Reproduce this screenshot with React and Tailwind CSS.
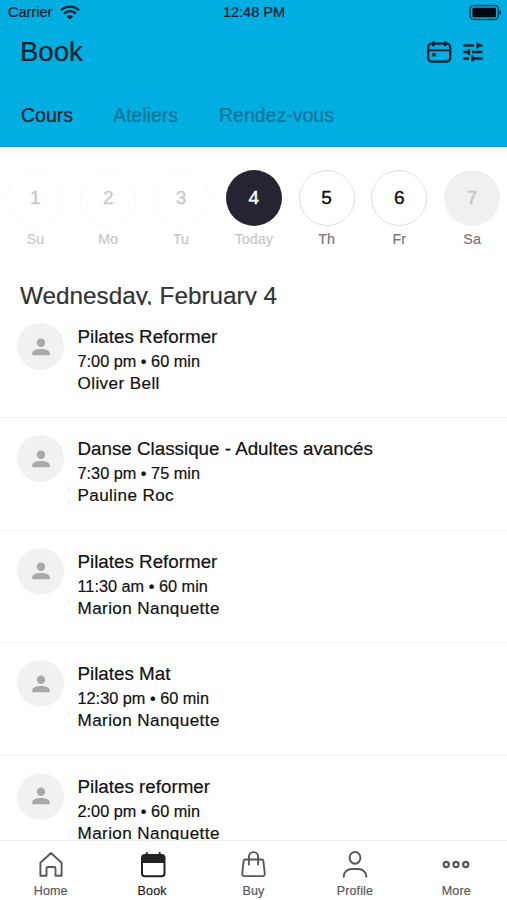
import React, { useState } from 'react'

const TABS = [
  { value: 'cours', label: 'Cours', className: 'w-[92px]' },
  { value: 'ateliers', label: 'Ateliers', className: 'w-[106px]' },
  { value: 'rendez-vous', label: 'Rendez-vous', className: '' },
]

const DAYS = [
  { date: 1, label: 'Su', state: 'past' },
  { date: 2, label: 'Mo', state: 'past' },
  { date: 3, label: 'Tu', state: 'past' },
  { date: 4, label: 'Today', state: 'selected' },
  { date: 5, label: 'Th', state: 'open' },
  { date: 6, label: 'Fr', state: 'open' },
  { date: 7, label: 'Sa', state: 'empty' },
]

const CIRCLE_STYLES = {
  past: 'border border-[#fafafa] text-[#c9c9c9]',
  selected: 'bg-[#252432] text-white',
  open: 'border border-[#dedede] text-[#111]',
  empty: 'bg-[#f0f0f0] text-[#c4c4c4]',
}

const LABEL_STYLES = {
  past: 'text-[#c8c8c8]',
  selected: 'text-[#c8c8c8]',
  open: 'text-[#777]',
  empty: 'text-[#777]',
}

const CLASSES = [
  { id: 1, title: 'Pilates Reformer', time: '7:00 pm', length: '60 min', teacher: 'Oliver Bell' },
  { id: 2, title: 'Danse Classique - Adultes avancés', time: '7:30 pm', length: '75 min', teacher: 'Pauline Roc' },
  { id: 3, title: 'Pilates Reformer', time: '11:30 am', length: '60 min', teacher: 'Marion Nanquette' },
  { id: 4, title: 'Pilates Mat', time: '12:30 pm', length: '60 min', teacher: 'Marion Nanquette' },
  { id: 5, title: 'Pilates reformer', time: '2:00 pm', length: '60 min', teacher: 'Marion Nanquette' },
]

function HomeIcon() {
  return (
    <svg width="28" height="28" viewBox="0 0 28 28" fill="none" stroke="currentColor" strokeWidth="1.9" strokeLinejoin="round">
      <path d="M3.4 12.7 14 3l10.6 9.700v13h-6.100v-7.200q0-1.500-1.500-1.500h-6q-1.500 0-1.500 1.500v7.200H3.400z" />
    </svg>
  )
}

function BookIcon() {
  return (
    <svg width="28" height="28" viewBox="0 0 28 28" fill="none" stroke="currentColor" strokeWidth="2">
      <rect x="4" y="5" width="22.500" height="21.300" rx="2.800" />
      <path d="M4 5h22.500v8H4z" fill="currentColor" stroke="none" />
      <path d="M8.800 3v4M21.700 3v4" strokeLinecap="round" />
    </svg>
  )
}

function BuyIcon() {
  return (
    <svg width="28" height="28" viewBox="0 0 28 28" fill="none" stroke="currentColor" strokeWidth="1.9" strokeLinecap="round" strokeLinejoin="round">
      <path d="M6 9.500h17q1.200 0 1.300 1.200l1.500 12.800q.2 2.600-2.300 2.600h-18q-2.500 0-2.300-2.600l1.500-12.800Q4.800 9.500 6 9.500z" />
      <path d="M9.900 14.500V6.700a4.600 4.600 0 0 1 9.200 0v7.800" />
    </svg>
  )
}

function ProfileIcon() {
  return (
    <svg width="28" height="28" viewBox="0 0 28 28" fill="none" stroke="currentColor" strokeWidth="2">
      <ellipse cx="14" cy="7.800" rx="5.400" ry="5.900" />
      <path d="M2.700 27.500v-1c0-4.500 4-7.500 8-7.500h6.600c4 0 8 3 8 7.500v1" />
    </svg>
  )
}

function MoreIcon() {
  return (
    <svg width="28" height="28" viewBox="0 0 28 28" fill="none" stroke="currentColor" strokeWidth="2.200">
      <circle cx="4.300" cy="14.500" r="2.600" />
      <circle cx="14" cy="14.500" r="2.600" />
      <circle cx="23.700" cy="14.500" r="2.600" />
    </svg>
  )
}

const NAV_ITEMS = [
  { value: 'home', label: 'Home', Icon: HomeIcon },
  { value: 'book', label: 'Book', Icon: BookIcon },
  { value: 'buy', label: 'Buy', Icon: BuyIcon },
  { value: 'profile', label: 'Profile', Icon: ProfileIcon },
  { value: 'more', label: 'More', Icon: MoreIcon },
]

function StatusBar() {
  return (
    <div className="grid h-6 grid-cols-3 items-center pl-2 pr-1 text-[14.5px] leading-none text-[#06202b]">
      <div className="flex items-center gap-2">
        <span>Carrier</span>
        <svg width="20" height="15" viewBox="0 0 20 15" fill="none" stroke="currentColor" strokeWidth="2.3">
          <path d="M1 5.300a12.700 12.700 0 0 1 18 0" />
          <path d="M4.200 8.600a8.200 8.200 0 0 1 11.600 0" />
          <path d="M10 14.500 6.900 11.300a4.400 4.400 0 0 1 6.200 0z" fill="currentColor" stroke="none" />
        </svg>
      </div>
      <span className="pr-[3px] text-center">12:48 PM</span>
      <svg className="justify-self-end" width="34" height="17" viewBox="0 0 34 17">
        <rect x="1.200" y="1.500" width="28" height="14" rx="3.500" fill="none" stroke="#064158" strokeWidth="1.400" />
        <rect x="3.400" y="3.700" width="23.600" height="9.600" rx="1.500" fill="#010a10" />
        <path d="M30.200 6v5c1.300-.5 2-1.400 2-2.500s-.7-2-2-2.500z" fill="#064158" />
      </svg>
    </div>
  )
}

function Header({ tab, onTab }) {
  return (
    <header className="h-[147px] shrink-0 border-b border-[#1c9bc4] bg-[#00aee2]">
      <StatusBar />
      <div className="flex h-14 items-center justify-between pl-5 pr-[23px]">
        <h1 className="text-[27.5px] leading-none text-[#08202a]">Book</h1>
        <div className="flex items-center gap-2.5 text-[#08202a]">
          <svg width="26" height="24" viewBox="0 0 26 24" fill="none" stroke="currentColor" strokeWidth="2.2">
            <rect x="2.200" y="3.600" width="22" height="18" rx="3.500" />
            <path d="M2 10.300h22" strokeWidth="1.800" />
            <path d="M7.200 1.200v5M19.200 1.200v5" strokeWidth="2.400" />
            <circle cx="8" cy="14.700" r="1.900" fill="currentColor" stroke="none" />
          </svg>
          <svg width="22" height="24" viewBox="0 0 22 24" fill="none" stroke="currentColor" strokeWidth="2.3">
            <path d="M1.500 5.500h10.500M15.500 5.500h5M1.500 12h5M10 12h10.500M1.500 18.500h5.500M10.500 18.500h10" />
            <path d="M15.500 2.500v6M7 9v6M10.500 15.500v6" />
          </svg>
        </div>
      </div>
      <div className="flex h-[71px] items-center pl-[21px] pt-px text-[19.5px] leading-none">
        {TABS.map((item) => (
          <button
            key={item.value}
            type="button"
            onClick={() => onTab(item.value)}
            className={`text-left ${item.className} ${tab === item.value ? 'text-[#08202a]' : 'text-[#087298]'}`}
          >
            {item.label}
          </button>
        ))}
      </div>
    </header>
  )
}

function DayPicker() {
  return (
    <div className="-ml-px -mr-[1.5px] grid shrink-0 grid-cols-7 pt-[23px]">
      {DAYS.map((day) => (
        <div key={day.date} className="flex flex-col items-center">
          <div className={`flex size-14 items-center justify-center rounded-full text-[19px] [-webkit-text-stroke:0.4px] ${CIRCLE_STYLES[day.state]}`}>
            {day.date}
          </div>
          <span className={`mt-[3px] text-[14.3px] leading-5 ${LABEL_STYLES[day.state]}`}>{day.label}</span>
        </div>
      ))}
    </div>
  )
}

function ClassRow({ item }) {
  return (
    <article className="flex h-[112.4px] shrink-0 border-b border-[#f3f3f3] pl-[17px] pt-[17px]">
      <div className="flex size-[47px] shrink-0 items-center justify-center rounded-full bg-[#f1f1f1] text-[#a9a9a9]">
        <svg width="18" height="18" viewBox="0 0 18 18" fill="currentColor">
          <circle cx="9" cy="4.700" r="4.200" />
          <path d="M.3 17.300v-2.100C.3 12.200 5 11 9 11s8.700 1.200 8.700 4.200v2.100z" />
        </svg>
      </div>
      <div className="ml-[13.5px] mt-[2px] whitespace-nowrap text-[#111]">
        <h3 className="text-[18.8px] leading-6">{item.title}</h3>
        <p className="mt-px text-[16.3px] leading-[22px]">{item.time} • {item.length}</p>
        <p className="mt-px text-[17.1px] leading-[22px] tracking-[0.4px]">{item.teacher}</p>
      </div>
    </article>
  )
}

function BottomNav({ active, onChange }) {
  return (
    <nav className="grid h-[60px] shrink-0 grid-cols-5 border-t border-[#efefef] bg-white">
      {NAV_ITEMS.map(({ value, label, Icon }) => (
        <button
          key={value}
          type="button"
          onClick={() => onChange(value)}
          className={`flex flex-col items-center pt-[9px] ${active === value ? 'text-[#222]' : 'text-[#58585a]'}`}
        >
          <Icon />
          <span className="mt-[5px] text-[12.5px] leading-4 tracking-[0.15px]">{label}</span>
        </button>
      ))}
    </nav>
  )
}

export default function App() {
  const [tab, setTab] = useState('cours')
  const [page, setPage] = useState('book')

  return (
    <div className="flex h-[900px] w-full flex-col overflow-hidden bg-white font-['Liberation_Sans',Arial,sans-serif] [-webkit-text-stroke:0.2px]">
      <Header tab={tab} onTab={setTab} />
      <DayPicker />
      <h2 className="mb-px mt-[33px] h-[23px] shrink-0 overflow-hidden pl-5 text-[24.3px] leading-[27px] text-[#333]">
        Wednesday, February 4
      </h2>
      <main className="flex min-h-0 flex-1 flex-col overflow-hidden">
        {CLASSES.map((item) => (
          <ClassRow key={item.id} item={item} />
        ))}
      </main>
      <BottomNav active={page} onChange={setPage} />
    </div>
  )
}
